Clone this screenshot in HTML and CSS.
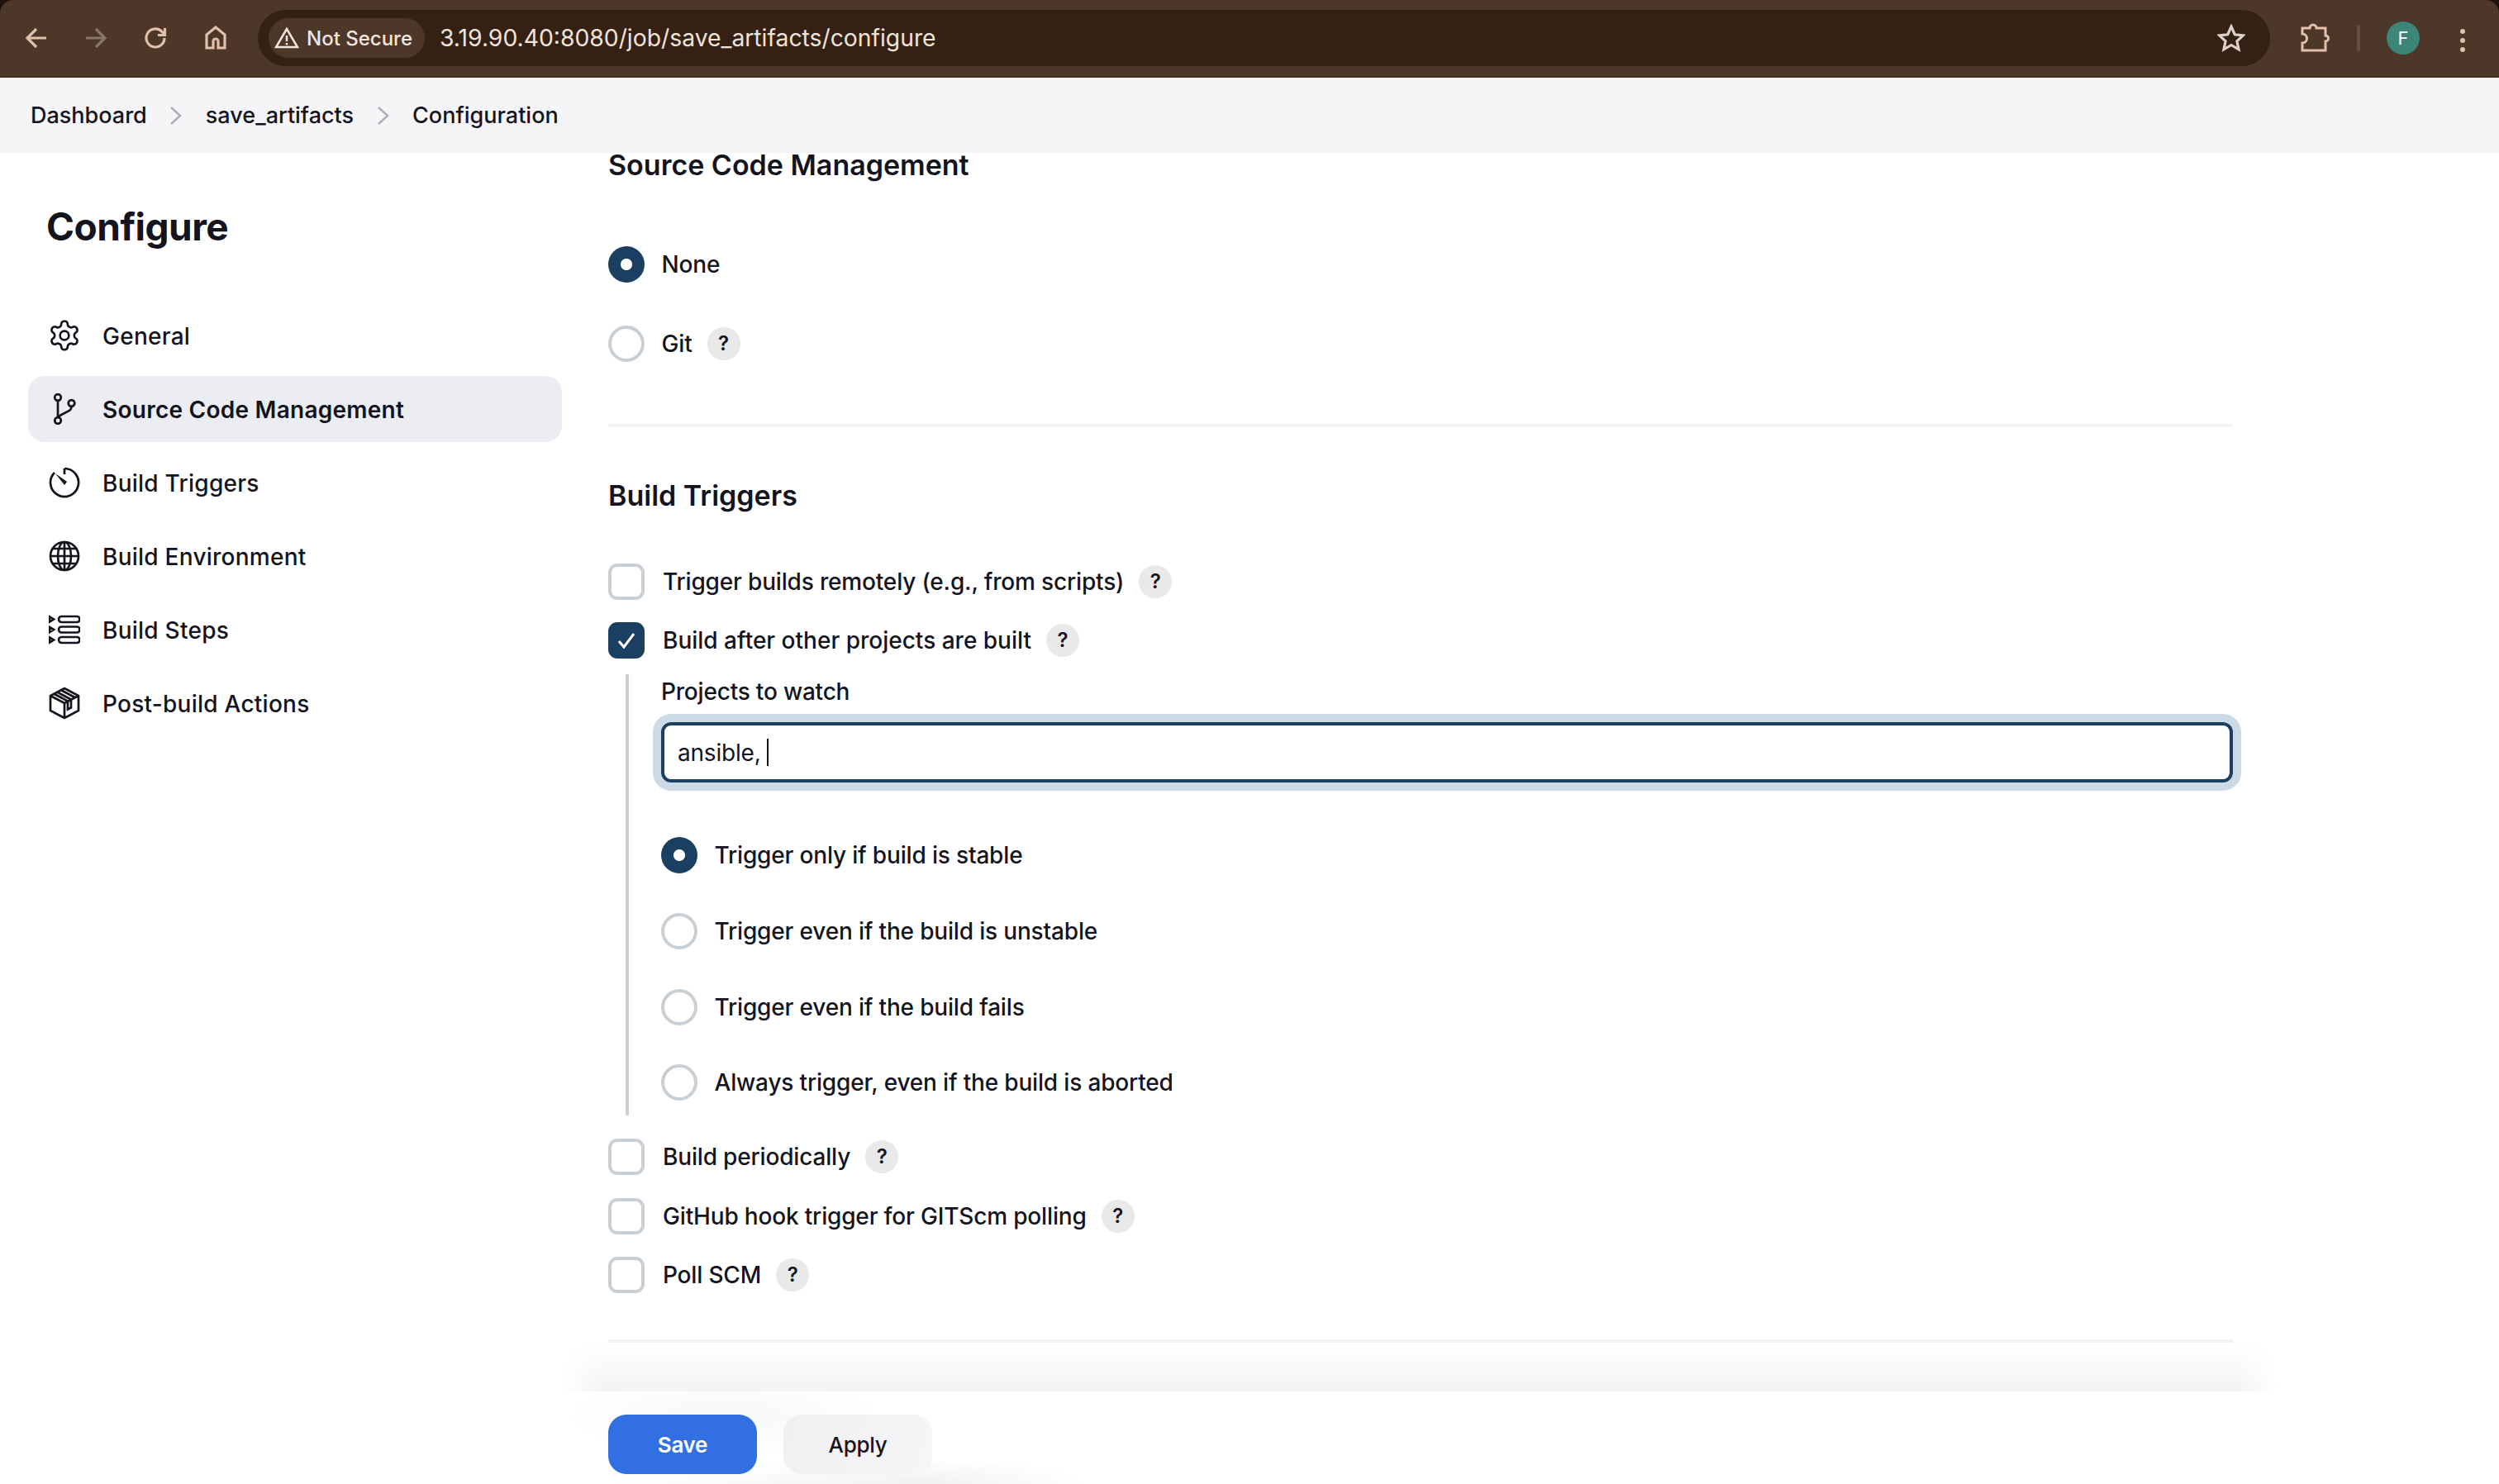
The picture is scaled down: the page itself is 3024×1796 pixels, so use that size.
FILE: index.html
```html
<!DOCTYPE html>
<html>
<head>
	<meta charset="UTF-8">
	<title>save_artifacts Config</title>
	<link rel="stylesheet" href="styles.css">
</head>
<body>
<div class="toolbar">
	<svg class="tool" viewBox="0 0 32 32"><path d="M28 16H6M16 5L5 16l11 11"/></svg>
	<svg class="tool off" viewBox="0 0 32 32"><path d="M4 16h22M16 5l11 11-11 11"/></svg>
	<svg class="tool" viewBox="0 0 32 32"><path d="M27 16a11 11 0 1 1-3-7.600l3.500 3.500M27.500 4v8.500H19"/></svg>
	<svg class="tool" viewBox="0 0 32 32"><path d="M17 3L6 12v16h8v-8a3 3 0 0 1 6 0v8h8V12z"/></svg>
	<div class="omnibox">
		<div class="chip">
			<svg class="warn" viewBox="0 0 30 30"><path d="M15 4L2 26h26zM15 12v7M15 21v2.500"/></svg>
			<span>Not Secure</span>
		</div>
		<div class="url">3.19.90.40:8080/job/save_artifacts/configure</div>
		<svg class="star" viewBox="0 0 32 32"><path d="M16 3l4 9 9.500 1-7 6.500 2 9.500-8.500-5-8.500 5 2-9.500-7-6.500 9.500-1z"/></svg>
	</div>
	<svg class="puzzle" viewBox="0 0 36 36"><path d="M3 6h9a4 4 0 0 1 8 0h11v9a3.500 3.500 0 0 1 0 7v11H3v-9a5.500 5.500 0 0 0 0-11z"/></svg>
	<div class="sep"></div>
	<div class="avatar">F</div>
	<div class="dots"><i></i><i></i><i></i></div>
</div>

<div class="crumbs">
	<a>Dashboard</a>
	<svg class="chev" viewBox="0 0 16 28"><path d="M2 4l11 10L2 24"/></svg>
	<a>save_artifacts</a>
	<svg class="chev" viewBox="0 0 16 28"><path d="M2 4l11 10L2 24"/></svg>
	<a>Configuration</a>
</div>

<div class="main">
	<div class="side">
		<h1>Configure</h1>
		<ul class="nav">
			<li>
				<svg class="gear" viewBox="1 1 22 22"><path d="M12.220 2h-.44a2 2 0 0 0-2 2v.18a2 2 0 0 1-1 1.730l-.43.25a2 2 0 0 1-2 0l-.15-.08a2 2 0 0 0-2.730.73l-.22.38a2 2 0 0 0 .73 2.730l.15.1a2 2 0 0 1 1 1.720v.51a2 2 0 0 1-1 1.740l-.15.09a2 2 0 0 0-.73 2.730l.22.38a2 2 0 0 0 2.730.73l.15-.08a2 2 0 0 1 2 0l.43.25a2 2 0 0 1 1 1.730V20a2 2 0 0 0 2 2h.44a2 2 0 0 0 2-2v-.18a2 2 0 0 1 1-1.730l.43-.25a2 2 0 0 1 2 0l.15.08a2 2 0 0 0 2.730-.73l.22-.39a2 2 0 0 0-.73-2.730l-.15-.08a2 2 0 0 1-1-1.740v-.5a2 2 0 0 1 1-1.740l.15-.09a2 2 0 0 0 .73-2.730l-.22-.38a2 2 0 0 0-2.730-.73l-.15.08a2 2 0 0 1-2 0l-.43-.25a2 2 0 0 1-1-1.730V4a2 2 0 0 0-2-2z"/><circle cx="12" cy="12" r="3.100"/></svg>
				General
			</li>
			<li class="on">
				<svg viewBox="0 0 38 38"><circle cx="11" cy="5" r="3.800"/><circle cx="11" cy="33" r="3.800"/><circle cx="27.500" cy="12" r="3.800"/><path d="M11 9v20M27.500 16c0 7-9 6-16.500 13"/></svg>
				Source Code Management
			</li>
			<li>
				<svg viewBox="0 0 38 38"><path d="M19 2a17 17 0 1 1-12 5M19 2v7"/><path class="solid" d="M8 8l14 10-3 4z"/></svg>
				Build Triggers
			</li>
			<li>
				<svg viewBox="0 0 38 38"><circle cx="19" cy="19" r="17"/><ellipse cx="19" cy="19" rx="8" ry="17"/><path d="M19 2v34M2 19h34M5 10h28M5 28h28"/></svg>
				Build Environment
			</li>
			<li>
				<svg viewBox="0 0 38 38"><rect x="12" y="3" width="25.500" height="7" rx="3.500"/><rect x="12" y="15.500" width="25.500" height="7" rx="3.500"/><rect x="12" y="28" width="25.500" height="7" rx="3.500"/><path d="M1 3.500l5 3-5 3zM1 16l5 3-5 3zM1 28.500l5 3-5 3z"/></svg>
				Build Steps
			</li>
			<li>
				<svg viewBox="0 0 38 38"><path d="M19 1l17 9v18l-17 9-17-9V10zM2 10l17 9 17-9M19 19v18M10 5.500l17 9v10l-4 2v-10L6 7.500M15 3.300l17 9"/></svg>
				Post-build Actions
			</li>
		</ul>
	</div>

	<div class="content">
		<div class="form">
			<h2 class="first">Source Code Management</h2>
			<label class="opt scm-none"><span class="radio sel"></span>None</label>
			<label class="opt scm-git"><span class="radio"></span>Git<span class="help">?</span></label>
			<hr class="rule-a">

			<h2 class="second">Build Triggers</h2>
			<label class="opt chk t1"><span class="check"></span>Trigger builds remotely (e.g., from scripts)<span class="help">?</span></label>
			<label class="opt chk t2"><span class="check sel"><svg viewBox="0 0 44 44"><path d="M13 23l6 7 12-16"/></svg></span>Build after other projects are built<span class="help">?</span></label>

			<div class="nested">
				<div class="field-label">Projects to watch</div>
				<div class="input">ansible, <span class="caret"></span></div>
				<div class="radios">
					<label class="opt"><span class="radio sel"></span>Trigger only if build is stable</label>
					<label class="opt"><span class="radio"></span>Trigger even if the build is unstable</label>
					<label class="opt"><span class="radio"></span>Trigger even if the build fails</label>
					<label class="opt"><span class="radio"></span>Always trigger, even if the build is aborted</label>
				</div>
			</div>

			<div class="checks">
				<label class="opt chk"><span class="check"></span>Build periodically<span class="help">?</span></label>
				<label class="opt chk"><span class="check"></span>GitHub hook trigger for GITScm polling<span class="help">?</span></label>
				<label class="opt chk"><span class="check"></span>Poll SCM<span class="help">?</span></label>
			</div>
			<hr class="rule-b">
		</div>
		<div class="bottom">
			<button class="btn save">Save</button>
			<button class="btn apply">Apply</button>
		</div>
	</div>
</div>
</body>
</html>
```

FILE: styles.css
```css
* {
	box-sizing: border-box;
}
html, body {
	margin: 0;
	height: 100%;
	overflow: hidden;
}
body {
	display: flex;
	flex-direction: column;
	background: #1d130c;
	font-family: Inter, "Liberation Sans", sans-serif;
	font-size: 28px;
	color: #14141f;
}

/* browser bar */
.toolbar {
	height: 94px;
	flex: none;
	display: flex;
	align-items: flex-start;
	padding: 12px 0 0 28px;
	background: #4c3729;
	border-bottom: 2px solid #443226;
	border-radius: 16px 16px 0 0;
}
.tool {
	width: 32px;
	height: 32px;
	margin: 18px 40px 0 0;
	fill: none;
	stroke: #e3c0a9;
	stroke-width: 3.200;
}
.tool.off {
	stroke: #8a7667;
}
.omnibox {
	width: 2435px;
	height: 68px;
	margin-left: -4px;
	display: flex;
	align-items: center;
	padding-left: 13px;
	background: #352114;
	border-radius: 34px;
}
.chip {
	width: 189px;
	height: 48px;
	display: flex;
	align-items: center;
	gap: 9px;
	padding-left: 7px;
	background: #4c3729;
	border-radius: 24px;
	color: #f0e6df;
	font-size: 24px;
	font-weight: 500;
	white-space: nowrap;
}
.warn {
	width: 30px;
	height: 30px;
	fill: none;
	stroke: #f0e6df;
	stroke-width: 2.500;
}
.url {
	flex: 1;
	margin-left: 18px;
	color: #efe3da;
	font-size: 28.300px;
}
.star {
	width: 34px;
	height: 34px;
	margin-right: 30px;
	fill: none;
	stroke: #dcd2cb;
	stroke-width: 3;
}
.puzzle {
	width: 36px;
	height: 36px;
	margin: 16px 0 0 36px;
	fill: none;
	stroke: #e3c0a9;
	stroke-width: 3;
}
.sep {
	width: 4px;
	height: 32px;
	margin: 18px 0 0 33px;
	background: #654f40;
	border-radius: 2px;
}
.avatar {
	width: 40px;
	height: 40px;
	margin: 14px 0 0 32px;
	background: #3c8577;
	border-radius: 50%;
	color: #fff;
	font-size: 22px;
	line-height: 40px;
	text-align: center;
}
.dots {
	margin: 23px 0 0 49px;
	display: flex;
	flex-direction: column;
	gap: 5px;
}
.dots i {
	display: block;
	width: 6px;
	height: 6px;
	background: #e3c0a9;
	border-radius: 50%;
}

/* breadcrumb */
.crumbs {
	height: 91px;
	flex: none;
	display: flex;
	align-items: center;
	padding: 0 37px;
	background: #f5f5f8;
	font-size: 27px;
	font-weight: 500;
}
.chev {
	width: 16px;
	height: 28px;
	margin: 0 27.500px;
	fill: none;
	stroke: #aeaeb8;
	stroke-width: 2.500;
}

/* page */
.main {
	flex: 1;
	display: flex;
	min-height: 0;
	background: #fff;
}
.side {
	width: 736px;
	flex: none;
	padding-left: 34px;
}
h1 {
	margin: 65px 0 0 22px;
	font-size: 46px;
	line-height: 48px;
	font-weight: 650;
	letter-spacing: -.5px;
}
.nav {
	width: 646px;
	margin: 68px 0 0;
	padding: 0;
	list-style: none;
	display: flex;
	flex-direction: column;
	gap: 9px;
}
.nav li {
	height: 80px;
	display: flex;
	align-items: center;
	gap: 27px;
	padding: 2px 0 0 25px;
	border-radius: 20px;
	font-weight: 500;
	letter-spacing: .25px;
}
.nav li.on {
	background: #ecedf3;
	font-weight: 600;
}
.nav svg {
	width: 38px;
	height: 38px;
	flex: none;
	margin-top: -2px;
	fill: none;
	stroke: #14141f;
	stroke-width: 2.700;
}
.nav svg.gear {
	stroke-width: 1.550;
}
.nav svg .solid {
	fill: #14141f;
	stroke: none;
}

.content {
	flex: 1;
	display: flex;
	flex-direction: column;
	min-width: 0;
}
.form {
	flex: 1;
	min-height: 0;
	width: 1966px;
}
h2 {
	margin: 0;
	font-size: 34px;
	font-weight: 600;
}
h2.first {
	height: 30px;
	line-height: 30px;
}
h2.second {
	height: 40px;
	line-height: 40px;
	margin-top: 63px;
}
.opt {
	display: flex;
	align-items: center;
	height: 44px;
	font-weight: 500;
	letter-spacing: -.17px;
	white-space: nowrap;
}
.radio, .check {
	width: 44px;
	height: 44px;
	flex: none;
	border: 4px solid #c8d0d6;
	background: #fff;
}
.radio {
	margin-right: 20.500px;
	border-radius: 50%;
}
.radio.sel {
	border: 0;
	background: radial-gradient(circle, #fff 6.500px, #1b3f60 7.500px);
}
.check {
	margin-right: 22px;
	border-radius: 11px;
}
.check.sel {
	border: 0;
	background: #1b3f60;
}
.check svg {
	display: block;
	fill: none;
	stroke: #fff;
	stroke-width: 3;
}
.help {
	width: 40px;
	height: 40px;
	margin-left: 18px;
	background: #e9e9e9;
	border-radius: 50%;
	font-size: 24px;
	font-weight: 600;
	line-height: 40px;
	text-align: center;
}
.scm-none {
	margin-top: 83px;
}
.scm-git {
	margin-top: 52px;
}
hr {
	height: 4px;
	margin: 0;
	border: 0;
	background: #f3f3f7;
}
.rule-a {
	margin-top: 75px;
}
.rule-b {
	margin-top: 56px;
}
.t1 {
	margin-top: 62px;
}
.t2 {
	margin-top: 27px;
	letter-spacing: 0;
}
.nested {
	margin: 19px 0 0 21px;
	height: 534px;
	padding: 1px 0 0 39px;
	border-left: 4px solid #c9d0d5;
}
.field-label {
	height: 40px;
	line-height: 40px;
	font-weight: 500;
	letter-spacing: -.2px;
}
.input {
	height: 73px;
	margin-top: 17px;
	display: flex;
	align-items: center;
	padding-left: 16px;
	border: 4px solid #1b3f60;
	border-radius: 12px;
	box-shadow: 0 0 0 10px #ccd9e6;
	letter-spacing: -.2px;
	white-space: pre;
}
.caret {
	width: 2px;
	height: 33px;
	background: #14141f;
}
.radios {
	margin-top: 66px;
	display: flex;
	flex-direction: column;
	gap: 47.800px;
}
.checks {
	margin-top: 28px;
	display: flex;
	flex-direction: column;
	gap: 27.500px;
}

/* sticky buttons */
.bottom {
	position: relative;
	height: 112px;
	flex: none;
	display: flex;
	gap: 32px;
	padding-top: 28px;
}
.bottom::before {
	content: "";
	position: absolute;
	left: -56px;
	top: -59px;
	width: 2076px;
	height: 59px;
	background: linear-gradient(#fff, #f3f3f3);
	-webkit-mask-image: linear-gradient(90deg, transparent, #000 50px, #000 2026px, transparent);
	mask-image: linear-gradient(90deg, transparent, #000 50px, #000 2026px, transparent);
}
.bottom::after {
	content: "";
	position: absolute;
	left: -60px;
	top: 0;
	width: 720px;
	height: 112px;
	background:
		radial-gradient(ellipse 190px 50px at 200px 30px, #f7f7f8, transparent),
		radial-gradient(ellipse 200px 30px at 440px 112px, #f1f1f1, transparent),
		radial-gradient(ellipse 200px 24px at 260px 112px, #f8f8f8, transparent);
}
.btn {
	position: relative;
	z-index: 1;
	width: 180px;
	height: 72px;
	border: 0;
	border-radius: 22px;
	font-family: inherit;
	font-size: 26px;
	letter-spacing: -.3px;
}
.save {
	background: #316fe2;
	color: #fff;
	font-weight: 600;
}
.apply {
	background: linear-gradient(110deg, #f0f0f3, #f6f6f9);
	color: #14141f;
	font-weight: 500;
}
```
